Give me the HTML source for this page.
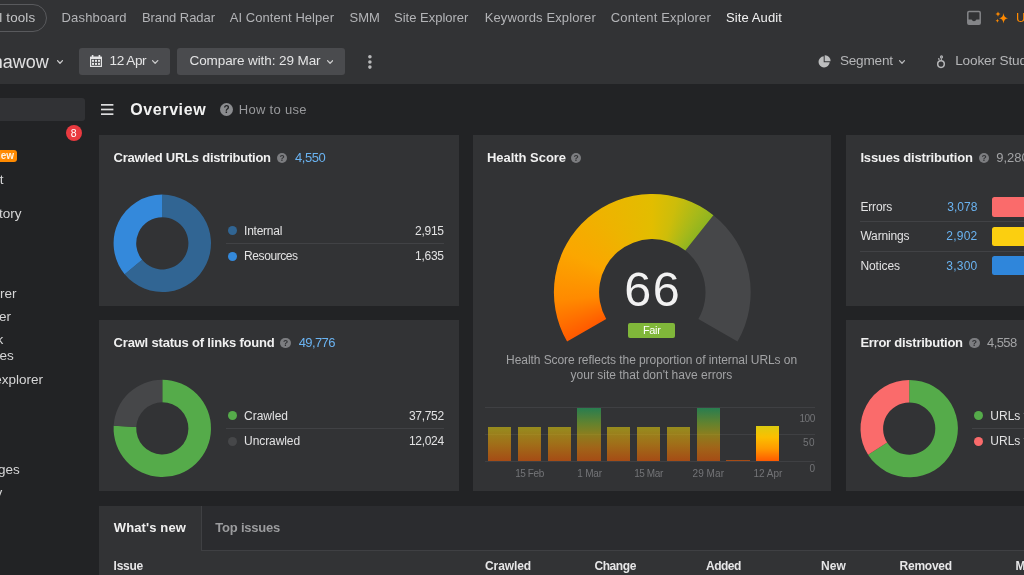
<!DOCTYPE html>
<html><head><meta charset="utf-8"><title>Site Audit</title>
<style>
html,body{margin:0;padding:0;overflow:hidden}
body{width:1024px;height:575px;overflow:hidden;background:#222325;position:relative;font-family:'Liberation Sans', sans-serif}
.t{position:absolute;white-space:pre;line-height:1;font-family:'Liberation Sans', sans-serif}
.b{position:absolute}
.card{position:absolute;background:#323335}
.btn{position:absolute;background:#4a4b4e;border-radius:3px}
.dot{position:absolute;width:9.6px;height:9.6px;border-radius:50%}
.sep{position:absolute;height:1px;background:#414245}
</style></head><body>
<!-- top bars -->
<div class="b" style="left:0;top:0;width:1024px;height:84px;background:#323335"></div>
<div class="b" style="left:-40px;top:4.3px;width:85px;height:25.7px;border:1px solid #595a5d;border-radius:14px"></div>
<!-- inbox icon -->
<svg class="b" style="left:966px;top:10px" width="16" height="16" viewBox="0 0 16 16"><rect x="1.8" y="1.6" width="12.4" height="12.6" rx="1.2" fill="none" stroke="#848588" stroke-width="1.5"/><path d="M1.8 9.6H5.6Q6.3 11.3 8 11.3Q9.7 11.3 10.4 9.6H14.2V13Q14.2 14.2 13 14.2H3Q1.8 14.2 1.8 13Z" fill="#848588"/></svg>
<!-- sparkles -->
<svg class="b" style="left:994px;top:10px" width="18" height="16" viewBox="0 0 18 16"><g fill="#ff8a00"><path d="M9.5 2.9Q9.9 7.6 14 8.2Q9.9 8.8 9.5 13.5Q9.1 8.8 5 8.2Q9.1 7.6 9.5 2.9Z"/><path d="M4 1.4Q4.2 3.8 6.6 4.1Q4.2 4.4 4 6.8Q3.8 4.4 1.4 4.1Q3.8 3.8 4 1.4Z"/><path d="M3.4 8.7Q3.55 10.5 5.3 10.7Q3.55 10.9 3.4 12.7Q3.25 10.9 1.5 10.7Q3.25 10.5 3.4 8.7Z"/></g></svg>
<!-- second bar -->
<svg class="b" style="left:57px;top:59.6px" width="6" height="4" viewBox="0 0 6 4"><path d="M0.52 0.65L3 3.29L5.48 0.65" fill="none" stroke="#c9c9ca" stroke-width="1.3" stroke-linecap="round" stroke-linejoin="round"/></svg>
<div class="btn" style="left:78.5px;top:48.3px;width:91.5px;height:26.5px"></div>
<svg class="b" style="left:89px;top:54px" width="14" height="14" viewBox="0 0 14 14"><path d="M1.6 2.4H12.4Q13 2.4 13 3V12.4Q13 13 12.4 13H1.6Q1 13 1 12.4V3Q1 2.4 1.6 2.4Z" fill="#e4e4e5"/><rect x="2.2" y="5" width="9.6" height="6.8" fill="#4a4b4e"/><g fill="#e4e4e5"><rect x="2.8" y="1" width="1.6" height="2"/><rect x="9.6" y="1" width="1.6" height="2"/><rect x="3" y="5.8" width="2" height="2"/><rect x="6" y="5.8" width="2" height="2"/><rect x="9" y="5.8" width="2" height="2"/><rect x="3" y="8.9" width="2" height="2"/><rect x="6" y="8.9" width="2" height="2"/><rect x="9" y="8.9" width="2" height="2"/></g></svg>
<svg class="b" style="left:152.3px;top:59.6px" width="6.3" height="4" viewBox="0 0 6.3 4"><path d="M0.52 0.65L3.15 3.29L5.78 0.65" fill="none" stroke="#c9c9ca" stroke-width="1.3" stroke-linecap="round" stroke-linejoin="round"/></svg>
<div class="btn" style="left:177.4px;top:48.3px;width:167.6px;height:26.5px"></div>
<svg class="b" style="left:327.2px;top:59.6px" width="6.2" height="4" viewBox="0 0 6.2 4"><path d="M0.52 0.65L3.1 3.29L5.68 0.65" fill="none" stroke="#c9c9ca" stroke-width="1.3" stroke-linecap="round" stroke-linejoin="round"/></svg>
<svg class="b" style="left:367px;top:54px" width="6" height="16" viewBox="0 0 6 16"><g fill="#b9babb"><circle cx="2.9" cy="2.8" r="1.8"/><circle cx="2.9" cy="8" r="1.8"/><circle cx="2.9" cy="13.1" r="1.8"/></g></svg>
<!-- pie icon -->
<svg class="b" style="left:817px;top:54px" width="15" height="15" viewBox="0 0 15 15"><path d="M6.7 2.3A5.6 5.6 0 1 0 12.7 8.3H6.7Z" fill="#bcbdbe"/><path d="M7.7 1.3A5.6 5.6 0 0 1 13.6 7.3H7.7Z" fill="#bcbdbe"/></svg>
<svg class="b" style="left:898.8px;top:59.6px" width="6" height="4" viewBox="0 0 6 4"><path d="M0.52 0.65L3 3.29L5.48 0.65" fill="none" stroke="#b5b6b8" stroke-width="1.3" stroke-linecap="round" stroke-linejoin="round"/></svg>
<!-- looker icon -->
<svg class="b" style="left:935px;top:54px" width="12" height="15" viewBox="0 0 12 15"><g fill="none" stroke="#b5b6b8"><circle cx="6" cy="10.1" r="3.3" stroke-width="1.5"/><circle cx="6.5" cy="2.9" r="1" stroke-width="1.1"/><path d="M6.2 6.6L6.4 4.2" stroke-width="1.1"/><circle cx="3.8" cy="4.9" r=".8" fill="#b5b6b8" stroke="none"/><path d="M4.2 5.4L5.2 6.9" stroke-width="1"/></g></svg>
<!-- sidebar -->
<div class="b" style="left:-10px;top:97.8px;width:95px;height:23px;background:#313235;border-radius:3px"></div>
<div class="b" style="left:-20px;top:150.3px;width:37px;height:12px;border-radius:3px;background:#ff8a00"></div>
<!-- overview -->
<svg class="b" style="left:101px;top:103px" width="13" height="13" viewBox="0 0 13 13"><g fill="#dcdcdd"><rect x="0" y="1" width="12.4" height="1.7"/><rect x="0" y="5.65" width="12.4" height="1.7"/><rect x="0" y="10.3" width="12.4" height="1.7"/></g></svg>
<!-- cards -->
<div class="card" style="left:99px;top:135.4px;width:359.6px;height:170.6px"></div>
<div class="card" style="left:99px;top:320.4px;width:359.6px;height:170.6px"></div>
<div class="card" style="left:472.8px;top:135.4px;width:358.5px;height:355.6px"></div>
<div class="card" style="left:845.8px;top:135.4px;width:200px;height:170.6px"></div>
<div class="card" style="left:845.8px;top:320.4px;width:200px;height:170.6px"></div>
<div class="card" style="left:99px;top:506px;width:940px;height:80px"></div>
<div class="b" style="left:200.5px;top:506px;width:840px;height:45px;background:#2b2c2f;border-left:1px solid #3f4043;border-bottom:1px solid #3f4043;box-sizing:border-box"></div>
<!-- svg overlay for donuts and gauge -->
<svg class="b" style="left:0;top:0" width="1024" height="575" viewBox="0 0 1024 575">
<path d="M162.30 194.60A48.7 48.7 0 1 1 124.65 274.19L142.12 259.85A26.1 26.1 0 1 0 162.30 217.20Z" fill="#316593"/><path d="M124.65 274.19A48.7 48.7 0 0 1 162.30 194.60L162.30 217.20A26.1 26.1 0 0 0 142.12 259.85Z" fill="#3489db"/>
<path d="M162.30 379.70A48.7 48.7 0 1 1 113.67 425.82L136.24 427.02A26.1 26.1 0 1 0 162.30 402.30Z" fill="#55ab4a"/><path d="M113.67 425.82A48.7 48.7 0 0 1 162.30 379.70L162.30 402.30A26.1 26.1 0 0 0 136.24 427.02Z" fill="#464749"/>
<path d="M909.20 379.90A48.7 48.7 0 1 1 868.08 454.69L887.16 442.59A26.1 26.1 0 1 0 909.20 402.50Z" fill="#55ab4a"/><path d="M868.08 454.69A48.7 48.7 0 0 1 909.20 379.90L909.20 402.50A26.1 26.1 0 0 0 887.16 442.59Z" fill="#fa6b6b"/>
</svg>
<div class="b" style="left:552.3px;top:192.3px;width:200px;height:200px;background:#464749;clip-path:path('M161.12 22.88A98.4 98.4 0 0 1 185.22 149.20L146.07 126.60A53.2 53.2 0 0 0 133.05 58.31Z')"></div><div class="b" style="left:552.3px;top:192.3px;width:200px;height:200px;background:conic-gradient(from -120deg at 100px 100px,#ff5a00 0.0deg,#ff8a00 25.0deg,#fba600 55.0deg,#edb400 90.0deg,#e2bd00 120.0deg,#cdbd0a 135.0deg,#a6b91a 150.0deg,#90b520 158.4deg,#90b520 250deg,#ff5a00 250deg,#ff5a00 360deg);clip-path:path('M14.78 149.20A98.4 98.4 0 0 1 161.12 22.88L133.05 58.31A53.2 53.2 0 0 0 53.93 126.60Z')"></div>
<!-- legends -->
<div class="dot" style="left:227.5px;top:225.7px;background:#316593"></div>
<div class="dot" style="left:227.5px;top:251.7px;background:#3489db"></div>
<div class="sep" style="left:226px;top:243px;width:218px"></div>
<div class="dot" style="left:227.5px;top:410.7px;background:#55ab4a"></div>
<div class="dot" style="left:227.5px;top:436.7px;background:#464749"></div>
<div class="sep" style="left:226px;top:428px;width:218px"></div>
<div class="dot" style="left:973.6px;top:410.7px;background:#55ab4a"></div>
<div class="dot" style="left:973.6px;top:436.7px;background:#fa6b6b"></div>
<div class="sep" style="left:972px;top:428px;width:60px"></div>
<!-- fair badge -->
<div class="b" style="left:628.1px;top:322.8px;width:47.3px;height:15.3px;border-radius:2px;background:#80b73a"></div>
<!-- issue bars -->
<div class="b" style="left:991.9px;top:197.1px;width:40px;height:19.5px;border-radius:2.5px;background:#fa6b6b"></div>
<div class="b" style="left:991.9px;top:226.8px;width:40px;height:19px;border-radius:2.5px;background:#fbcf10"></div>
<div class="b" style="left:991.9px;top:255.9px;width:40px;height:19px;border-radius:2.5px;background:#2f86db"></div>
<div class="sep" style="left:860.4px;top:221px;width:170px"></div>
<div class="sep" style="left:860.4px;top:250.6px;width:170px"></div>
<!-- chart grid -->
<div class="sep" style="left:485.2px;top:407px;width:329.5px;background:#3f4043"></div>
<div class="sep" style="left:485.2px;top:434px;width:329.5px;background:#3f4043"></div>
<div class="sep" style="left:485.2px;top:460.8px;width:329.5px;background:#3f4043"></div>
<div class="b" style="left:488px;top:427.3px;width:23.3px;height:33.7px;opacity:.6;background:linear-gradient(to top,#f25c00 0%,#ea9606 50%,#d9c80f 100%)"></div>
<div class="b" style="left:517.8px;top:427.3px;width:23.3px;height:33.7px;opacity:.6;background:linear-gradient(to top,#f25c00 0%,#ea9606 50%,#d9c80f 100%)"></div>
<div class="b" style="left:547.6px;top:427.3px;width:23.3px;height:33.7px;opacity:.6;background:linear-gradient(to top,#f25c00 0%,#ea9606 50%,#d9c80f 100%)"></div>
<div class="b" style="left:577.4px;top:407.92px;width:23.3px;height:53.08px;opacity:.6;background:linear-gradient(to top,#f25c00 0%,#ea8506 25%,#c8af0f 50%,#86b728 70%,#22af62 100%)"></div>
<div class="b" style="left:607.2px;top:426.87px;width:23.3px;height:34.13px;opacity:.6;background:linear-gradient(to top,#f25c00 0%,#ea9606 50%,#d9c80f 100%)"></div>
<div class="b" style="left:637px;top:426.87px;width:23.3px;height:34.13px;opacity:.6;background:linear-gradient(to top,#f25c00 0%,#ea9606 50%,#d9c80f 100%)"></div>
<div class="b" style="left:666.8px;top:426.87px;width:23.3px;height:34.13px;opacity:.6;background:linear-gradient(to top,#f25c00 0%,#ea9606 50%,#d9c80f 100%)"></div>
<div class="b" style="left:696.6px;top:407.54px;width:23.3px;height:53.46px;opacity:.6;background:linear-gradient(to top,#f25c00 0%,#ea8506 25%,#c8af0f 50%,#86b728 70%,#22af62 100%)"></div>
<div class="b" style="left:726.4px;top:459.92px;width:23.3px;height:1.08px;opacity:.6;background:linear-gradient(to top,#f25c00,#f25c00)"></div>
<div class="b" style="left:756.2px;top:426.01px;width:23.3px;height:34.99px;opacity:1;background:linear-gradient(to top,#ff5a00 0%,#ff9a00 35%,#fbbf00 68%,#dccb10 100%)"></div>
<div class="b" style="left:0;top:0;width:1024px;height:575px;will-change:transform">
<div class="b" style="left:65.6px;top:125px;width:16px;height:16px;border-radius:50%;background:#ea3a40;color:#fff;font:400 10.5px/16px 'Liberation Sans', sans-serif;text-align:center">8</div>
<div class="b" style="left:220px;top:103px;width:13px;height:13px;border-radius:50%;background:#8b8c8f;color:#222325;font:700 10px/13px 'Liberation Sans', sans-serif;text-align:center">?</div>
<div style="position:absolute;left:276.8px;top:152.9px;width:10.6px;height:10.6px;border-radius:50%;background:#7c7d80;color:#323335;font:700 8.5px/10.6px 'Liberation Sans', sans-serif;text-align:center">?</div><div style="position:absolute;left:280.3px;top:337.9px;width:10.6px;height:10.6px;border-radius:50%;background:#7c7d80;color:#323335;font:700 8.5px/10.6px 'Liberation Sans', sans-serif;text-align:center">?</div><div style="position:absolute;left:570.8px;top:152.9px;width:10.6px;height:10.6px;border-radius:50%;background:#7c7d80;color:#323335;font:700 8.5px/10.6px 'Liberation Sans', sans-serif;text-align:center">?</div><div style="position:absolute;left:978.8px;top:152.9px;width:10.6px;height:10.6px;border-radius:50%;background:#7c7d80;color:#323335;font:700 8.5px/10.6px 'Liberation Sans', sans-serif;text-align:center">?</div><div style="position:absolute;left:969px;top:337.9px;width:10.6px;height:10.6px;border-radius:50%;background:#7c7d80;color:#323335;font:700 8.5px/10.6px 'Liberation Sans', sans-serif;text-align:center">?</div>
<span class="t" style="top:10.86px;font-size:13.4px;color:#c4c5c7;right:988.7px;letter-spacing:0.15px;">All tools</span>
<span class="t" style="top:11.2px;font-size:13px;color:#b3b4b7;left:61.5px;letter-spacing:0.17px;">Dashboard</span>
<span class="t" style="top:11.2px;font-size:13px;color:#b3b4b7;left:141.9px;letter-spacing:-0.06px;">Brand Radar</span>
<span class="t" style="top:11.2px;font-size:13px;color:#b3b4b7;left:229.7px;letter-spacing:0.06px;">AI Content Helper</span>
<span class="t" style="top:11.2px;font-size:13px;color:#b3b4b7;left:349.5px;letter-spacing:0.02px;">SMM</span>
<span class="t" style="top:11.2px;font-size:13px;color:#b3b4b7;left:394px;letter-spacing:-0px;">Site Explorer</span>
<span class="t" style="top:11.2px;font-size:13px;color:#b3b4b7;left:484.7px;letter-spacing:0.12px;">Keywords Explorer</span>
<span class="t" style="top:11.2px;font-size:13px;color:#b3b4b7;left:610.8px;letter-spacing:0.16px;">Content Explorer</span>
<span class="t" style="top:11.2px;font-size:13px;color:#f2f2f2;left:725.9px;letter-spacing:0.12px;">Site Audit</span>
<span class="t" style="top:11.2px;font-size:13px;color:#ff8a00;left:1015.9px;">Upgrade</span>
<span class="t" style="top:53.16px;font-size:18px;color:#e0e0e1;right:975.2px;">banawow</span>
<span class="t" style="top:54.29px;font-size:13.6px;color:#e4e4e5;left:109.6px;letter-spacing:-0.48px;">12 Apr</span>
<span class="t" style="top:54.37px;font-size:13.5px;color:#e4e4e5;left:189.5px;letter-spacing:-0.09px;">Compare with: 29 Mar</span>
<span class="t" style="top:54.19px;font-size:13.6px;color:#b5b6b8;left:839.9px;letter-spacing:-0.2px;">Segment</span>
<span class="t" style="top:54.19px;font-size:13.6px;color:#b5b6b8;left:955.2px;letter-spacing:-0.15px;">Looker Studio</span>
<span class="t" style="top:101.56px;font-size:16px;color:#f2f2f2;font-weight:700;left:130.3px;letter-spacing:0.59px;">Overview</span>
<span class="t" style="top:103.1px;font-size:13px;color:#98999c;left:238.8px;letter-spacing:0.3px;">How to use</span>
<span class="t" style="top:151.3px;font-size:13px;color:#f0f0f0;font-weight:700;left:113.6px;letter-spacing:-0.24px;">Crawled URLs distribution</span>
<span class="t" style="top:151.3px;font-size:13px;color:#6ab3f1;left:295px;letter-spacing:-0.44px;">4,550</span>
<span class="t" style="top:225.04px;font-size:12px;color:#e2e2e3;left:244.1px;letter-spacing:-0.26px;">Internal</span>
<span class="t" style="top:225.04px;font-size:12px;color:#e2e2e3;left:415px;letter-spacing:-0.26px;">2,915</span>
<span class="t" style="top:250.24px;font-size:12px;color:#e2e2e3;left:244.1px;letter-spacing:-0.42px;">Resources</span>
<span class="t" style="top:250.24px;font-size:12px;color:#e2e2e3;left:415px;letter-spacing:-0.26px;">1,635</span>
<span class="t" style="top:336.3px;font-size:13px;color:#f0f0f0;font-weight:700;left:113.6px;letter-spacing:-0.19px;">Crawl status of links found</span>
<span class="t" style="top:336.3px;font-size:13px;color:#6ab3f1;left:298.7px;letter-spacing:-0.6px;">49,776</span>
<span class="t" style="top:410.04px;font-size:12px;color:#e2e2e3;left:244.1px;letter-spacing:-0.02px;">Crawled</span>
<span class="t" style="top:410.04px;font-size:12px;color:#e2e2e3;left:409px;letter-spacing:-0.33px;">37,752</span>
<span class="t" style="top:435.24px;font-size:12px;color:#e2e2e3;left:244.1px;letter-spacing:-0.09px;">Uncrawled</span>
<span class="t" style="top:435.24px;font-size:12px;color:#e2e2e3;left:409px;letter-spacing:-0.33px;">12,024</span>
<span class="t" style="top:151.3px;font-size:13px;color:#f0f0f0;font-weight:700;left:487px;letter-spacing:-0.04px;">Health Score</span>
<span class="t" style="top:264.54px;font-size:48.5px;color:#f2f2f2;left:624.2px;letter-spacing:1.5px;">66</span>
<span class="t" style="top:324.99px;font-size:11px;color:#ffffff;left:642.9px;letter-spacing:-0.34px;">Fair</span>
<span class="t" style="top:354.14px;font-size:12px;color:#a2a3a5;left:506.1px;letter-spacing:-0.07px;">Health Score reflects the proportion of internal URLs on</span>
<span class="t" style="top:368.64px;font-size:12px;color:#a2a3a5;left:570.6px;letter-spacing:-0px;">your site that don't have errors</span>
<span class="t" style="top:413.54px;font-size:10px;color:#737477;left:799.5px;letter-spacing:-0.44px;">100</span>
<span class="t" style="top:437.74px;font-size:10px;color:#737477;left:803px;letter-spacing:0.5px;">50</span>
<span class="t" style="top:463.74px;font-size:10px;color:#737477;left:809.6px;letter-spacing:0px;">0</span>
<span class="t" style="top:469.14px;font-size:10px;color:#737477;left:515.2px;letter-spacing:-0.41px;">15 Feb</span>
<span class="t" style="top:469.14px;font-size:10px;color:#737477;left:577.3px;letter-spacing:-0.2px;">1 Mar</span>
<span class="t" style="top:469.14px;font-size:10px;color:#737477;left:634.2px;letter-spacing:-0.41px;">15 Mar</span>
<span class="t" style="top:469.14px;font-size:10px;color:#737477;left:692.5px;letter-spacing:0.07px;">29 Mar</span>
<span class="t" style="top:469.14px;font-size:10px;color:#737477;left:753.5px;letter-spacing:-0.02px;">12 Apr</span>
<span class="t" style="top:151.3px;font-size:13px;color:#f0f0f0;font-weight:700;left:860.4px;letter-spacing:-0.17px;">Issues distribution</span>
<span class="t" style="top:151.3px;font-size:13px;color:#a2a3a5;left:996.2px;">9,280</span>
<span class="t" style="top:200.84px;font-size:12px;color:#e2e2e3;left:860.4px;letter-spacing:-0.17px;">Errors</span>
<span class="t" style="top:200.84px;font-size:12px;color:#6ab3f1;left:947.3px;letter-spacing:0.01px;">3,078</span>
<span class="t" style="top:230.14px;font-size:12px;color:#e2e2e3;left:860.4px;letter-spacing:-0.15px;">Warnings</span>
<span class="t" style="top:230.14px;font-size:12px;color:#6ab3f1;left:946.3px;letter-spacing:0.23px;">2,902</span>
<span class="t" style="top:259.64px;font-size:12px;color:#e2e2e3;left:860.4px;letter-spacing:-0.06px;">Notices</span>
<span class="t" style="top:259.64px;font-size:12px;color:#6ab3f1;left:946.3px;letter-spacing:0.23px;">3,300</span>
<span class="t" style="top:336.3px;font-size:13px;color:#f0f0f0;font-weight:700;left:860.4px;letter-spacing:-0.25px;">Error distribution</span>
<span class="t" style="top:336.3px;font-size:13px;color:#a2a3a5;left:987px;letter-spacing:-0.6px;">4,558</span>
<span class="t" style="top:410.04px;font-size:12px;color:#e2e2e3;left:990.3px;">URLs without errors</span>
<span class="t" style="top:435.24px;font-size:12px;color:#e2e2e3;left:990.3px;">URLs with errors</span>
<span class="t" style="top:521.2px;font-size:13px;color:#f0f0f0;font-weight:700;left:113.8px;letter-spacing:0.12px;">What's new</span>
<span class="t" style="top:521.2px;font-size:13px;color:#9b9c9e;font-weight:700;left:215.3px;letter-spacing:-0.21px;">Top issues</span>
<span class="t" style="top:559.84px;font-size:12px;color:#e6e6e7;font-weight:700;left:113.6px;letter-spacing:-0.27px;">Issue</span>
<span class="t" style="top:559.84px;font-size:12px;color:#e6e6e7;font-weight:700;left:485px;letter-spacing:-0.1px;">Crawled</span>
<span class="t" style="top:559.84px;font-size:12px;color:#e6e6e7;font-weight:700;left:594.5px;letter-spacing:-0.44px;">Change</span>
<span class="t" style="top:559.84px;font-size:12px;color:#e6e6e7;font-weight:700;left:706px;letter-spacing:-0.5px;">Added</span>
<span class="t" style="top:559.84px;font-size:12px;color:#e6e6e7;font-weight:700;left:821px;letter-spacing:0.12px;">New</span>
<span class="t" style="top:559.84px;font-size:12px;color:#e6e6e7;font-weight:700;left:899.5px;letter-spacing:-0.23px;">Removed</span>
<span class="t" style="top:559.84px;font-size:12px;color:#e6e6e7;font-weight:700;left:1015.5px;">Modified</span>
<span class="t" style="top:151.03px;font-size:10px;color:#fff3e2;font-weight:700;right:1010px;">New</span>
<span class="t" style="top:173.17px;font-size:13.5px;color:#d6d6d7;right:1020.4px;">Project</span>
<span class="t" style="top:206.87px;font-size:13.5px;color:#d6d6d7;right:1002.6px;">Crawl history</span>
<span class="t" style="top:286.97px;font-size:13.5px;color:#d6d6d7;right:1007.5px;">Page explorer</span>
<span class="t" style="top:309.87px;font-size:13.5px;color:#d6d6d7;right:1013px;">Link explorer</span>
<span class="t" style="top:332.77px;font-size:13.5px;color:#d6d6d7;right:1020.7px;">Internal link</span>
<span class="t" style="top:349.07px;font-size:13.5px;color:#d6d6d7;right:1010.3px;">opportunities</span>
<span class="t" style="top:372.67px;font-size:13.5px;color:#d6d6d7;right:981px;">Structure explorer</span>
<span class="t" style="top:463.07px;font-size:13.5px;color:#d6d6d7;right:1004.3px;">All pages</span>
<span class="t" style="top:485.77px;font-size:13.5px;color:#d6d6d7;right:1021.8px;">Indexability</span>
</div>
</body></html>
